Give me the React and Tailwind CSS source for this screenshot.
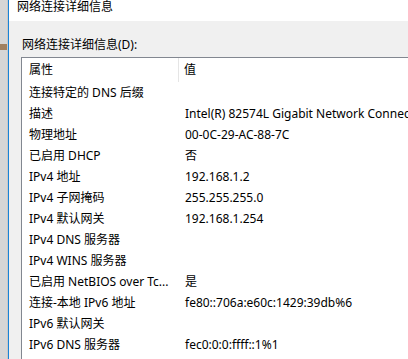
const rows = [
  ['连接特定的 DNS 后缀', ''],
  ['描述', 'Intel(R) 82574L Gigabit Network Connection'],
  ['物理地址', '00-0C-29-AC-88-7C'],
  ['已启用 DHCP', '否'],
  ['IPv4 地址', '192.168.1.2'],
  ['IPv4 子网掩码', '255.255.255.0'],
  ['IPv4 默认网关', '192.168.1.254'],
  ['IPv4 DNS 服务器', ''],
  ['IPv4 WINS 服务器', ''],
  ['已启用 NetBIOS over Tc...', '是'],
  ['连接-本地 IPv6 地址', 'fe80::706a:e60c:1429:39db%6'],
  ['IPv6 默认网关', ''],
  ['IPv6 DNS 服务器', 'fec0:0:0:ffff::1%1'],
]

export default function App() {
  return (
    <div
      className="w-[408px] h-[359px] overflow-hidden flex text-[12px] text-black"
      style={{ fontFamily: '"Noto Sans", "Noto Sans CJK SC", sans-serif' }}
    >
      {/* desktop strip + window edge */}
      <div className="w-[7px] bg-[#d6d6d6] flex flex-col shrink-0">
        <div className="h-[44px]" />
        <div className="h-[6px] bg-[#a08060]" />
      </div>
      <div className="w-px bg-[#c8c8c8] shrink-0" />
      <div className="w-px bg-[#1883d7] shrink-0" />

      <div className="flex-1 flex flex-col min-w-0">
        <div className="h-[21px] bg-white pl-[8px] leading-[14px] whitespace-nowrap">网络连接详细信息</div>

        <div className="flex-1 bg-[#f0f0f0] pl-[12px] flex flex-col min-h-0">
          <div className="pt-[16px] h-[36px] leading-[16px] pl-px whitespace-nowrap">网络连接详细信息(D):</div>

          <div className="flex-1 bg-white border-l border-t border-[#828790] flex flex-col min-h-0">
            <div className="h-[24px] flex items-center shrink-0">
              <div className="w-[157px] shrink-0 pl-[7px] h-full flex items-center border-r border-[#e5e5e5]">属性</div>
              <div className="pl-[5px]">值</div>
            </div>
            {rows.map(([k, v], i) => (
              <div key={i} className="h-[21px] flex items-center shrink-0 whitespace-nowrap">
                <div className="w-[157px] shrink-0 pl-[7px] overflow-hidden">{k}</div>
                <div className="pl-[6px] shrink-0">{v}</div>
              </div>
            ))}
          </div>
        </div>
      </div>
    </div>
  )
}
